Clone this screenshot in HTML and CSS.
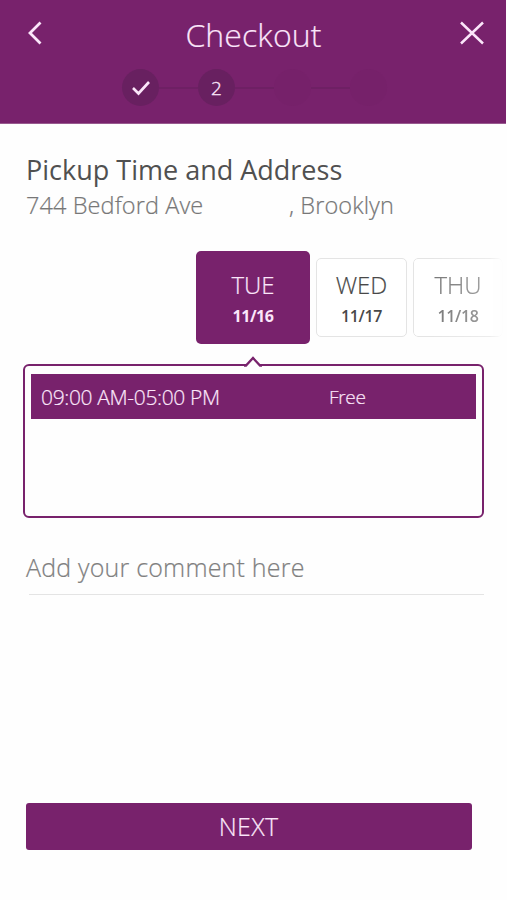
FILE: index.html
```html
<!DOCTYPE html>
<html lang="en">
<head>
<meta charset="utf-8">
<title>Checkout</title>
<link rel="stylesheet" href="styles.css">
</head>
<body>
<header class="header">
  <div class="bar">
    <svg class="back" width="16" height="24" viewBox="0 0 16 24"><path d="M13.500 1.500 3 12l10.500 10.500"/></svg>
    <h1 class="title">Checkout</h1>
    <svg class="close" width="26" height="24" viewBox="0 0 26 24"><path d="M2 1.500 24 22.500M24 1.500 2 22.500"/></svg>
  </div>
  <div class="steps">
    <span class="step"><svg width="20" height="16" viewBox="0 0 20 16"><path d="M2 8l5.500 5.500L18 2"/></svg></span>
    <i class="line"></i>
    <span class="step">2</span>
    <i class="line"></i>
    <span class="step upcoming"></span>
    <i class="line"></i>
    <span class="step upcoming"></span>
  </div>
</header>
<main class="content">
  <h2 class="heading">Pickup Time and Address</h2>
  <p class="address"><span class="street">744 Bedford Ave</span><span class="city">, Brooklyn</span></p>
  <div class="days">
    <div class="day selected"><span class="name">TUE</span><b class="date">11/16</b></div>
    <div class="day"><span class="name">WED</span><b class="date">11/17</b></div>
    <div class="day last"><span class="name">THU</span><b class="date">11/18</b></div>
  </div>
  <section class="slots">
    <svg class="pointer" width="18" height="11" viewBox="0 0 18 11"><path class="fill" d="M1 11 9 2l8 9z"/><path class="edge" d="M0 9.500H2L9 2l7 7.500h2"/></svg>
    <div class="slot"><span class="time">09:00 AM-05:00 PM</span><span class="price">Free</span></div>
  </section>
  <div class="comment"><span>Add your comment here</span></div>
  <button class="next"><span>NEXT</span></button>
</main>
</body>
</html>
```
FILE: styles.css
```css
* { box-sizing: border-box; }
body {
  margin: 0;
  height: 900px;
  overflow: hidden;
  background: #fefefe;
  color: #484848;
  font-family: "Open Sans", sans-serif;
  font-weight: 300;
  -webkit-text-stroke: 0.2px;
}
h1, h2, p { margin: 0; font-weight: inherit; }
svg { display: block; fill: none; stroke: #fbe6fa; }

.header { width: 506px; height: 124px; background: #78226c; border-bottom: 1px solid #985a8f; }
.bar { display: flex; height: 69px; padding: 0 21px 0 27px; align-items: flex-start; justify-content: space-between; }
.back { margin-top: 21px; stroke-width: 2.8; }
.close { margin-top: 21px; stroke-width: 2.5; }
.title { margin: 13px 0 0 5px; font-size: 32px; line-height: 44px; letter-spacing: 0.1px; color: #fbe6fa; }
.steps { display: flex; align-items: center; padding-left: 122px; }
.step {
  display: flex; align-items: center; justify-content: center;
  width: 37px; height: 37px; border-radius: 50%;
  background: #682060; color: #fbe6fa; font-size: 19px;
  -webkit-text-stroke: 0.4px;
}
.step svg { stroke-width: 2.6; }
.line { width: 39px; height: 2px; background: #6e2064; }
.upcoming { background: #76216a; }

.content { padding: 28px 23px 0 26px; }
.heading { font-size: 27px; line-height: 36px; font-weight: 400; color: #505050; white-space: nowrap; -webkit-text-stroke: 0; }
.address { display: flex; font-size: 23.500px; line-height: 34px; color: #777; letter-spacing: 0.1px; white-space: nowrap; }
.street { width: 263px; }

.days { display: flex; align-items: center; gap: 6px; width: 310px; margin: 29px 0 0 170px; }
.day {
  display: flex; flex-direction: column; align-items: center;
  flex: none; width: 91px; height: 79px; padding-top: 9px;
  border: 1.500px solid #e4e4e4; border-radius: 5px; background: #fff; color: #484848;
}
.name { font-size: 24px; line-height: 34px; }
.date { font-size: 16px; line-height: 28px; font-weight: 600; letter-spacing: -0.4px; -webkit-text-stroke: 0; }
.selected { width: 114px; height: 93px; padding-top: 17px; border: 0; background: #78226c; color: #fbe6fa; }
.selected .date { font-weight: 700; line-height: 29px; }
.last {
  width: 90px;
  color: #777;
  -webkit-mask-image: linear-gradient(90deg, #000 20%, rgba(0,0,0,.7) 85%, transparent);
  mask-image: linear-gradient(90deg, #000 20%, rgba(0,0,0,.7) 85%, transparent);
}

.slots {
  position: relative; width: 461px; height: 154px; margin: 20px 0 0 -3px; padding: 8px 6px 0 6px;
  border: 2.500px solid #78226c; border-radius: 6px; background: #fefefe;
}
.pointer { position: absolute; left: 219px; top: -10px; }
.pointer .fill { fill: #fefefe; stroke: none; }
.pointer .edge { stroke: #78226c; stroke-width: 2.3; }
.slot { display: flex; align-items: center; height: 45px; padding-left: 10px; background: #78226c; color: #fbe6fa; }
.time { width: 288px; font-size: 21px; letter-spacing: -0.35px; }
.price { font-size: 19px; letter-spacing: -0.3px; }

.comment { width: 455px; height: 48px; margin: 29px 0 0 3px; border-bottom: 1.500px solid #e4e4e4; color: #808080; font-size: 25px; line-height: 40px; letter-spacing: 0.2px; }
.comment span { margin-left: -3px; }
.next {
  display: flex; align-items: center; justify-content: center;
  width: 446px; height: 47px; margin-top: 208px; padding: 0 1px 2px 0;
  border: 0; border-radius: 3px; background: #78226c; color: #fbe6fa;
  font: 300 25px "Open Sans", sans-serif; letter-spacing: 0.3px;
  -webkit-text-stroke: 0.2px;
}
```
